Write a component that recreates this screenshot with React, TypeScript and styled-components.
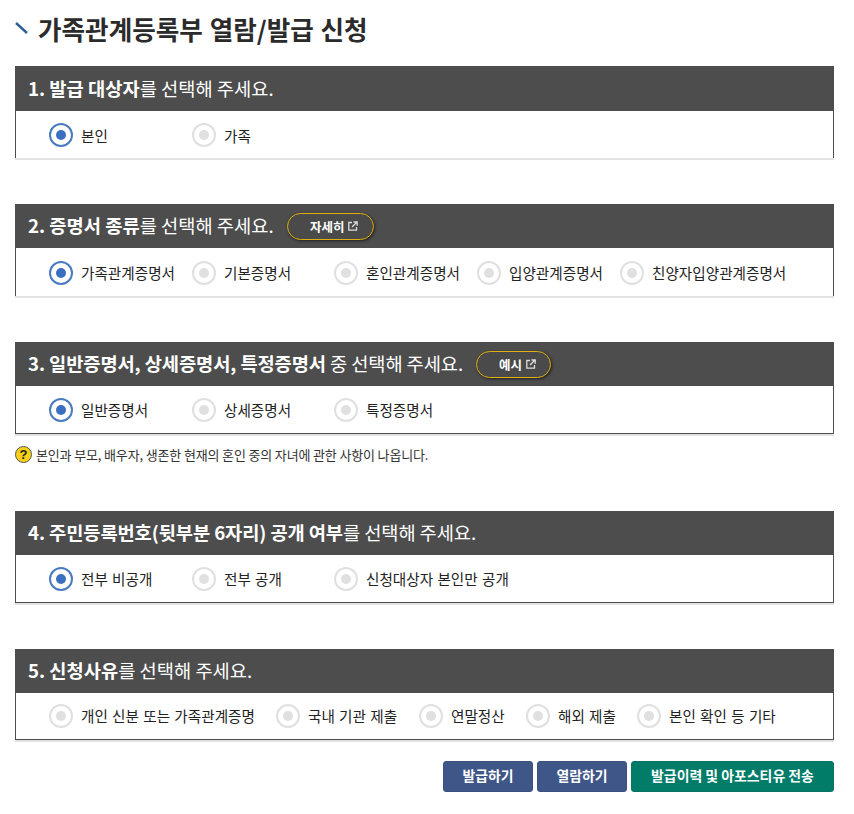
import { createGlobalStyle, styled } from 'styled-components';

const GlobalStyle = createGlobalStyle`
  html, body {
    margin: 0;
    background: #fff;
    font-family: 'Noto Sans CJK KR', 'Liberation Sans', sans-serif;
    color: #222;
  }
`;

const Page = styled.div`
  width: 819px;
  height: 814px;
  padding: 0 20px 0 15px;
`;

const Title = styled.h1`
  display: flex;
  align-items: center;
  gap: 10px;
  height: 66px;
  margin: 0;
  padding-bottom: 10px;
  box-sizing: border-box;
  font-size: 25.6px;
  font-weight: 700;
  word-spacing: 1px;
  color: #2b2b2b;
`;

const Section = styled.section<{ $gap: number }>`
  margin-bottom: ${p => p.$gap}px;
  box-shadow: 0 2px 0 #e2e2e2;
`;

const Header = styled.div<{ $tall?: boolean }>`
  display: flex;
  align-items: center;
  gap: 13px;
  height: ${p => (p.$tall ? 45 : 44)}px;
  padding-left: 13px;
  background: #4d4d4d;
  color: #fff;
`;

const HeaderText = styled.span<{ $tight?: boolean }>`
  padding-bottom: 3px;
  font-size: 18.72px;
  letter-spacing: ${p => (p.$tight ? -0.1 : 0)}px;
  white-space: pre;

  strong {
    font-weight: 700;
  }
`;

const Body = styled.div<{ $tall?: boolean; $open?: boolean }>`
  display: flex;
  align-items: center;
  height: ${p => (p.$tall ? 47 : 48)}px;
  box-sizing: border-box;
  padding-left: 33px;
  padding-top: ${p => (p.$open ? 1 : 0)}px;
  padding-bottom: ${p => (p.$tall && !p.$open ? 1 : 0)}px;
  border: 1px solid #4d4d4d;
  border-top: 0;
  border-bottom-width: ${p => (p.$open ? 0 : 1)}px;
`;

const Option = styled.label<{ $width: number }>`
  display: flex;
  align-items: center;
  gap: 8px;
  width: ${p => p.$width}px;
  flex-shrink: 0;
  font-size: 14.6px;
  word-spacing: 1px;
  color: #222;
  white-space: nowrap;
`;

const Radio = styled.span<{ $on?: boolean }>`
  display: flex;
  align-items: center;
  justify-content: center;
  width: 24px;
  height: 24px;
  box-sizing: border-box;
  border-radius: 50%;
  border: 2px solid ${p => (p.$on ? '#4a7abf' : '#e0e0e0')};
  flex-shrink: 0;

  &::after {
    content: '';
    width: 10px;
    height: 10px;
    border-radius: 50%;
    background: ${p => (p.$on ? '#3b6fc0' : '#e0e0e0')};
  }
`;

const DetailButton = styled.a<{ $width: number }>`
  display: flex;
  align-items: center;
  justify-content: center;
  gap: 4px;
  width: ${p => p.$width}px;
  height: 27px;
  padding-left: 8px;
  box-sizing: border-box;
  border: 1.5px solid #e0b010;
  border-radius: 14px;
  background: #4a4a4a;
  box-shadow: 1px 1px 3px rgba(0, 0, 0, 0.6);
  color: #fff;
  font-size: 12.5px;
  font-weight: 700;
`;

const Note = styled.p`
  display: flex;
  align-items: center;
  gap: 4px;
  height: 18px;
  margin: 11px 0 48px;
  font-size: 13px;
  letter-spacing: -0.15px;
  color: #333;
`;

const HelpIcon = styled.span`
  display: flex;
  align-items: center;
  justify-content: center;
  width: 17px;
  height: 17px;
  box-sizing: border-box;
  border-radius: 50%;
  border: 1.5px solid #555;
  background: #f8d01a;
  color: #222;
  font-family: 'Liberation Sans', sans-serif;
  font-size: 13px;
  font-weight: 700;
`;

const Actions = styled.div`
  display: flex;
  justify-content: flex-end;
  gap: 4px;
`;

const ActionButton = styled.button<{ $width: number; $green?: boolean }>`
  width: ${p => p.$width}px;
  height: 31px;
  padding: 0 0 3px;
  border: 1px solid ${p => (p.$green ? '#0a7463' : '#3a5080')};
  border-radius: 3px;
  background: ${p => (p.$green ? '#007c69' : '#3f5688')};
  color: #fff;
  font-family: inherit;
  font-size: 13.9px;
  font-weight: 700;
`;

function ExternalIcon() {
  return (
    <svg width="10" height="10" viewBox="0 0 10 10" fill="none" stroke="#ddd" strokeWidth="1.3">
      <path d="M4 1.5H.8v7.7h7.7V6" />
      <path d="M4 6l4.5-4.5M5.5 1h3.7v3.7" />
    </svg>
  );
}

function TitleMark() {
  return (
    <svg width="13" height="12" viewBox="0 0 13 12">
      <path d="M1 1l11 10" stroke="#2e5c94" strokeWidth="2.4" fill="none" />
    </svg>
  );
}

type Item = [string, number, boolean?];

function Options({ items, tall, open }: { items: Item[]; tall?: boolean; open?: boolean }) {
  return (
    <Body $tall={tall} $open={open}>
      {items.map(([label, width, on]) => (
        <Option key={label} $width={width}>
          <Radio $on={on} />
          {label}
        </Option>
      ))}
    </Body>
  );
}

export default function App() {
  return (
    <Page>
      <GlobalStyle />
      <Title>
        <TitleMark />
        가족관계등록부 열람/발급 신청
      </Title>

      <Section $gap={46}>
        <Header $tall>
          <HeaderText>
            <strong>1. 발급 대상자</strong>를 선택해 주세요.
          </HeaderText>
        </Header>
        <Options
          items={[
            ['본인', 143, true],
            ['가족', 142],
          ]}
          tall
          open
        />
      </Section>

      <Section $gap={46}>
        <Header>
          <HeaderText>
            <strong>2. 증명서 종류</strong>를 선택해 주세요.
          </HeaderText>
          <DetailButton $width={87}>
            자세히
            <ExternalIcon />
          </DetailButton>
        </Header>
        <Options
          items={[
            ['가족관계증명서', 143, true],
            ['기본증명서', 142],
            ['혼인관계증명서', 143],
            ['입양관계증명서', 143],
            ['친양자입양관계증명서', 190],
          ]}
          open
        />
      </Section>

      <Section $gap={0}>
        <Header>
          <HeaderText $tight>
            <strong>3. 일반증명서, 상세증명서, 특정증명서</strong> 중 선택해 주세요.
          </HeaderText>
          <DetailButton $width={75}>
            예시
            <ExternalIcon />
          </DetailButton>
        </Header>
        <Options
          items={[
            ['일반증명서', 143, true],
            ['상세증명서', 142],
            ['특정증명서', 143],
          ]}
        />
      </Section>
      <Note>
        <HelpIcon>?</HelpIcon>
        본인과 부모, 배우자, 생존한 현재의 혼인 중의 자녀에 관한 사항이 나옵니다.
      </Note>

      <Section $gap={46}>
        <Header>
          <HeaderText $tight>
            <strong>4. 주민등록번호(뒷부분 6자리) 공개 여부</strong>를 선택해 주세요.
          </HeaderText>
        </Header>
        <Options
          items={[
            ['전부 비공개', 143, true],
            ['전부 공개', 142],
            ['신청대상자 본인만 공개', 200],
          ]}
        />
      </Section>

      <Section $gap={21}>
        <Header>
          <HeaderText>
            <strong>5. 신청사유</strong>를 선택해 주세요.
          </HeaderText>
        </Header>
        <Options
          items={[
            ['개인 신분 또는 가족관계증명', 227],
            ['국내 기관 제출', 143],
            ['연말정산', 107],
            ['해외 제출', 111],
            ['본인 확인 등 기타', 160],
          ]}
          tall
        />
      </Section>

      <Actions>
        <ActionButton $width={90}>발급하기</ActionButton>
        <ActionButton $width={90}>열람하기</ActionButton>
        <ActionButton $width={203} $green>
          발급이력 및 아포스티유 전송
        </ActionButton>
      </Actions>
    </Page>
  );
}
